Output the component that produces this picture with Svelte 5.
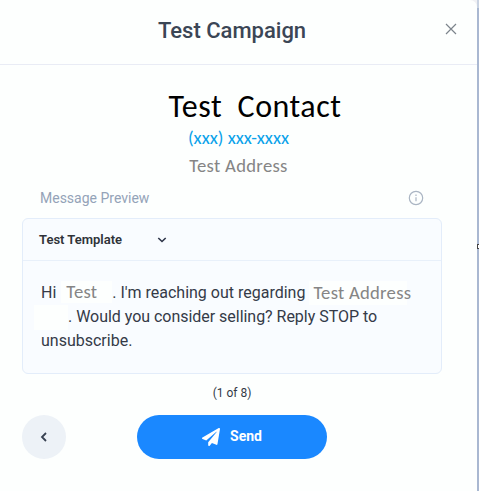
<script>
  let campaign = 'Test Campaign';
  let contact = {
    name: 'Test\u00a0 Contact',
    phone: '(xxx) xxx-xxxx',
    address: 'Test Address'
  };
  let template = 'Test Template';
  let current = 1;
  let total = 8;

  function previous() {
    if (current > 1) current -= 1;
  }

  function send() {
    if (current < total) current += 1;
  }
</script>

<div class="page">
  <div class="modal">
    <header class="modal-header">
      <h2>{campaign}</h2>
      <button class="close" aria-label="Close">
        <svg width="12" height="12" viewBox="0 0 12 12">
          <path d="M1 1l10 10M11 1L1 11" />
        </svg>
      </button>
    </header>

    <div class="contact">
      <div class="name">{contact.name}</div>
      <div class="phone">{contact.phone}</div>
      <div class="address">{contact.address}</div>
    </div>

    <div class="preview-label">
      <span>Message Preview</span>
      <svg width="16" height="16" viewBox="0 0 16 16">
        <circle cx="8" cy="8" r="6.7" />
        <path d="M8 7.2v4.1M8 4.4v1.5" />
      </svg>
    </div>

    <div class="preview">
      <button class="template">
        <span>{template}</span>
        <svg width="10" height="6" viewBox="0 0 10 6">
          <path d="M1.3 1L5 4.5 8.7 1" />
        </svg>
      </button>
      <div class="message">
        <div class="line">
          <span>Hi</span>
          <span class="field first">Test</span>
          <span>. I'm reaching out regarding</span>
          <span class="field street">Test Address</span>
        </div>
        <div class="line second">
          <span class="field blank"></span>
          <span>. Would you consider selling? Reply STOP to</span>
        </div>
        <div class="line">unsubscribe.</div>
      </div>
    </div>

    <div class="count">({current} of {total})</div>

    <div class="actions">
      <button class="back" aria-label="Previous" on:click={previous}>
        <svg width="8" height="12" viewBox="0 0 8 12">
          <path d="M6 2L2 6l4 4" />
        </svg>
      </button>
      <button class="send" on:click={send}>
        <svg width="18" height="18" viewBox="0 0 512 512">
          <path d="M476 3.2L12.5 270.6c-18.1 10.4-15.8 35.6 2.2 43.2L121 358.4l287.3-253.2c5.5-4.9 13.3 2.6 8.6 8.3L176 407v80.5c0 23.6 28.5 32.9 42.5 15.8L282 426l124.6 52.2c14.2 6 30.4-2.9 33-18.2l72-432C515 7.800 493.300-6.800 476 3.200z" />
        </svg>
        <span>Send</span>
      </button>
    </div>
  </div>
  <div class="scroll-edge"><i></i></div>
</div>

<style>
  :global(body) {
    margin: 0;
    overflow: hidden;
  }

  .page {
    display: flex;
    height: 491px;
    background: #f0f1f4;
    font-family: Roboto, sans-serif;
    color: #343a47;
  }

  .modal {
    width: 477px;
    box-sizing: border-box;
    background: #fdfffe;
    border-top-right-radius: 7px;
  }

  button {
    padding: 0;
    border: none;
    background: none;
    font-family: inherit;
    color: inherit;
    cursor: pointer;
  }

  svg {
    display: block;
    fill: none;
  }

  .modal-header {
    display: grid;
    grid-template-columns: 1fr auto 1fr;
    align-items: center;
    height: 65px;
    padding: 0 20px 2px 7px;
    box-sizing: border-box;
    border-bottom: 1px solid #e9ecf5;
  }

  h2 {
    grid-column: 2;
    margin: 0;
    font-size: 22px;
    line-height: 28px;
    font-weight: 500;
    color: #3b4655;
  }

  .close {
    justify-self: end;
    margin-top: -5px;
  }

  .close svg {
    stroke: #7c848c;
    stroke-width: 1.2;
  }

  .contact {
    display: flex;
    flex-direction: column;
    align-items: center;
    height: 120px;
    padding-top: 24px;
    box-sizing: border-box;
    font-family: Calibri, Carlito, "Open Sans", sans-serif;
  }

  .name {
    padding-left: 33px;
    line-height: 35px;
    font-size: 32px;
    letter-spacing: 0.5px;
    white-space: nowrap;
    color: #000;
  }

  .phone {
    line-height: 28px;
    font-size: 18.67px;
    color: #0aa2ea;
  }

  .address {
    line-height: 28px;
    font-size: 18.67px;
    letter-spacing: 0.3px;
    color: #858585;
  }

  .preview-label {
    display: flex;
    align-items: center;
    justify-content: space-between;
    height: 33px;
    padding: 0 53px 8px 40px;
    box-sizing: border-box;
    font-size: 14px;
    color: #94a3b8;
  }

  .preview-label svg {
    stroke: #aab5c3;
    stroke-width: 1.2;
  }

  .preview {
    width: 420px;
    height: 156px;
    margin-left: 22px;
    box-sizing: border-box;
    border: 1px solid #e3edfa;
    border-radius: 6px;
    background: #f9fcff;
  }

  .template {
    display: flex;
    align-items: center;
    width: 100%;
    height: 42px;
    padding-left: 16px;
    border-bottom: 1px solid #e8f0fa;
    font-size: 13px;
    font-weight: 600;
    color: #2f3338;
  }

  .template span {
    width: 118px;
    text-align: left;
  }

  .template svg {
    stroke: #2d3448;
    stroke-width: 1.6;
  }

  .message {
    padding: 20px 0 0 11px;
    font-size: 16px;
    line-height: 24px;
  }

  .line {
    display: flex;
    align-items: center;
    height: 24px;
    padding-left: 7px;
    white-space: nowrap;
  }

  .second {
    letter-spacing: -0.03px;
  }

  .field {
    box-sizing: border-box;
    background: #fdfffe;
    font-family: Calibri, Carlito, "Open Sans", sans-serif;
    font-size: 18.67px;
    letter-spacing: 0.25px;
    color: #858585;
  }

  .first {
    width: 51px;
    height: 22px;
    margin: -2px 0 0 5px;
    padding-left: 5px;
    line-height: 22px;
  }

  .street {
    width: 98px;
    margin-left: 4px;
    padding-left: 4px;
  }

  .blank {
    width: 34px;
    height: 25px;
    margin-left: -7px;
  }

  .count {
    height: 41px;
    padding-right: 13px;
    line-height: 38px;
    font-size: 12px;
    text-align: center;
  }

  .actions {
    display: flex;
    gap: 71px;
    padding-left: 22px;
  }

  .back {
    display: grid;
    place-items: center;
    width: 44px;
    height: 44px;
    border-radius: 50%;
    background: #edf2f7;
  }

  .back svg {
    stroke: #374151;
    stroke-width: 1.8;
  }

  .send {
    display: flex;
    align-items: center;
    justify-content: center;
    gap: 10px;
    width: 190px;
    height: 44px;
    border-radius: 22px;
    background: #1a88ff;
    font-size: 14px;
    font-weight: 700;
    color: #fff;
  }

  .send span {
    margin-top: -2px;
  }

  .send svg {
    fill: #fff;
  }

  .scroll-edge {
    display: flex;
    align-items: center;
    width: 2px;
    padding-bottom: 6px;
    background: #a9b8d1;
    border-top: 8px solid #c9d3e2;
    box-sizing: border-box;
    overflow: hidden;
  }

  .scroll-edge i {
    flex: none;
    width: 5px;
    height: 5px;
    box-sizing: border-box;
    border: 1px solid #444;
    background: #fff;
  }
</style>
